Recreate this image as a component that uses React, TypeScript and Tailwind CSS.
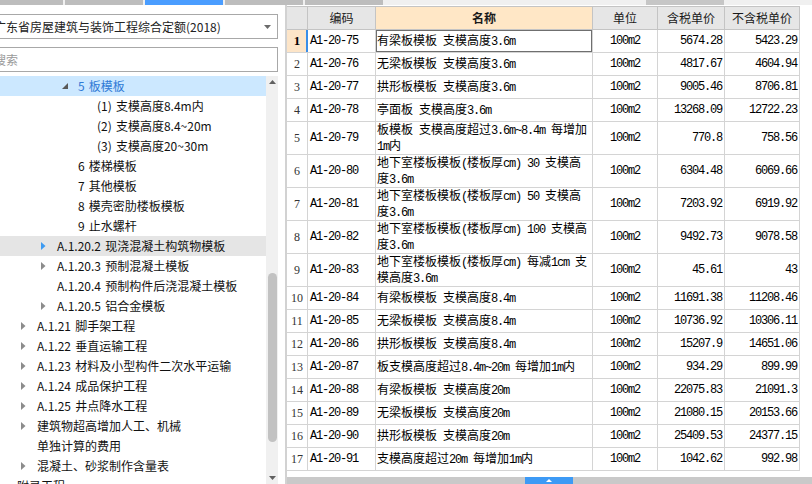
import React from 'react';

type TreeItem = {
  text: string;
  level: number;
  arrow?: 'open' | 'closed' | 'hover';
  state?: 'selected' | 'hover';
};

const tree: TreeItem[] = [
  { text: '5 板模板', level: 3, arrow: 'open', state: 'selected' },
  { text: '(1) 支模高度8.4m内', level: 4 },
  { text: '(2) 支模高度8.4~20m', level: 4 },
  { text: '(3) 支模高度20~30m', level: 4 },
  { text: '6 楼梯模板', level: 3 },
  { text: '7 其他模板', level: 3 },
  { text: '8 模壳密肋楼板模板', level: 3 },
  { text: '9 止水螺杆', level: 3 },
  { text: 'A.1.20.2 现浇混凝土构筑物模板', level: 2, arrow: 'hover', state: 'hover' },
  { text: 'A.1.20.3 预制混凝土模板', level: 2, arrow: 'closed' },
  { text: 'A.1.20.4 预制构件后浇混凝土模板', level: 2 },
  { text: 'A.1.20.5 铝合金模板', level: 2, arrow: 'closed' },
  { text: 'A.1.21 脚手架工程', level: 1, arrow: 'closed' },
  { text: 'A.1.22 垂直运输工程', level: 1, arrow: 'closed' },
  { text: 'A.1.23 材料及小型构件二次水平运输', level: 1, arrow: 'closed' },
  { text: 'A.1.24 成品保护工程', level: 1, arrow: 'closed' },
  { text: 'A.1.25 井点降水工程', level: 1, arrow: 'closed' },
  { text: '建筑物超高增加人工、机械', level: 1, arrow: 'closed' },
  { text: '单独计算的费用', level: 1 },
  { text: '混凝土、砂浆制作含量表', level: 1, arrow: 'closed' },
  { text: '附录工程', level: 0 },
];

const indent: Record<number, string> = {
  0: 'pl-[1px]',
  1: 'pl-[21px]',
  2: 'pl-[41px]',
  3: 'pl-[62px]',
  4: 'pl-[81px]',
};

type Row = { code: string; name: string[]; a: string; b: string };

const rows: Row[] = [
  { code: 'A1-20-75', name: ['有梁板模板 支模高度3.6m'], a: '5674.28', b: '5423.29' },
  { code: 'A1-20-76', name: ['无梁板模板 支模高度3.6m'], a: '4817.67', b: '4604.94' },
  { code: 'A1-20-77', name: ['拱形板模板 支模高度3.6m'], a: '9005.46', b: '8706.81' },
  { code: 'A1-20-78', name: ['亭面板 支模高度3.6m'], a: '13268.09', b: '12722.23' },
  { code: 'A1-20-79', name: ['板模板 支模高度超过3.6m~8.4m 每增加', '1m内'], a: '770.8', b: '758.56' },
  { code: 'A1-20-80', name: ['地下室楼板模板(楼板厚cm) 30 支模高', '度3.6m'], a: '6304.48', b: '6069.66' },
  { code: 'A1-20-81', name: ['地下室楼板模板(楼板厚cm) 50 支模高', '度3.6m'], a: '7203.92', b: '6919.92' },
  { code: 'A1-20-82', name: ['地下室楼板模板(楼板厚cm) 100 支模高', '度3.6m'], a: '9492.73', b: '9078.58' },
  { code: 'A1-20-83', name: ['地下室楼板模板(楼板厚cm) 每减1cm 支', '模高度3.6m'], a: '45.61', b: '43' },
  { code: 'A1-20-84', name: ['有梁板模板 支模高度8.4m'], a: '11691.38', b: '11208.46' },
  { code: 'A1-20-85', name: ['无梁板模板 支模高度8.4m'], a: '10736.92', b: '10306.11' },
  { code: 'A1-20-86', name: ['拱形板模板 支模高度8.4m'], a: '15207.9', b: '14651.06' },
  { code: 'A1-20-87', name: ['板支模高度超过8.4m~20m 每增加1m内'], a: '934.29', b: '899.99' },
  { code: 'A1-20-88', name: ['有梁板模板 支模高度20m'], a: '22075.83', b: '21091.3' },
  { code: 'A1-20-89', name: ['无梁板模板 支模高度20m'], a: '21080.15', b: '20153.66' },
  { code: 'A1-20-90', name: ['拱形板模板 支模高度20m'], a: '25409.53', b: '24377.15' },
  { code: 'A1-20-91', name: ['支模高度超过20m 每增加1m内'], a: '1042.62', b: '992.98' },
];

// ascii runs get a narrow mono face so they sit like the half-width digits of the original
function Mixed({ s }: { s: string }) {
  const parts = s.split(/([\x20-\x7e]+)/);
  return (
    <>
      {parts.map((p, i) =>
        /^[\x20-\x7e]+$/.test(p) ? (
          <span key={i} className="font-['Liberation_Mono',monospace] tracking-[-1.2px]">
            {p}
          </span>
        ) : (
          <span key={i}>{p}</span>
        ),
      )}
    </>
  );
}

function Arrow({ kind }: { kind?: TreeItem['arrow'] }) {
  if (kind === 'open') {
    return (
      <svg width="6" height="6" viewBox="0 0 6 6">
        <polygon points="6,0 6,6 0,6" fill="#595959" />
      </svg>
    );
  }
  if (kind === 'closed' || kind === 'hover') {
    return (
      <svg width="5" height="8" viewBox="0 0 5 8">
        <polygon points="0,0 4.5,4 0,8" fill={kind === 'hover' ? '#3d9bf2' : '#8c8c8c'} />
      </svg>
    );
  }
  return null;
}

function LeftPanel() {
  return (
    <div className="w-[285px] shrink-0 flex flex-col overflow-hidden bg-white pr-[7px]">
      <div className="ml-[-10px] mt-[9px] h-[25px] flex items-center border border-[#a8a8a8] bg-white pl-[3px] pr-[6px]">
        <span className="flex-1 whitespace-nowrap text-[12px] text-[#222]">广东省房屋建筑与装饰工程综合定额(2018)</span>
        <svg width="7" height="4" viewBox="0 0 7 4">
          <polygon points="0,0 7,0 3.5,4" fill="#6b6b6b" />
        </svg>
      </div>
      <div className="ml-[-10px] mt-[8px] h-[25px] flex items-center border border-[#a8a8a8] bg-white pl-[3px]">
        <span className="text-[12px] text-[#9a9a9a]">搜索</span>
      </div>
      <div className="mt-[4px] flex flex-1 min-h-0">
        <div className="flex-1 min-w-0 overflow-hidden">
          {tree.map((t, i) => (
            <div
              key={i}
              className={`h-[20px] flex items-center whitespace-nowrap ${indent[t.level]} ${
                t.state === 'selected' ? 'bg-[#cce8ff]' : t.state === 'hover' ? 'bg-[#e5e5e5]' : ''
              }`}
            >
              <span className="w-[16px] shrink-0 flex items-center">
                <Arrow kind={t.arrow} />
              </span>
              <span
                className={`text-[12px] leading-[20px] [word-spacing:1.5px] ${
                  t.state === 'selected' ? 'text-[#2f7ad6]' : 'text-[#111]'
                }`}
              >
                {t.text}
              </span>
            </div>
          ))}
        </div>
        <div className="w-[12px] shrink-0 bg-[#f0f0f0] flex flex-col items-center">
          <div className="h-[12px] flex items-center justify-center">
            <svg width="7" height="4" viewBox="0 0 7 4">
              <polygon points="3.5,0 7,4 0,4" fill="#606060" />
            </svg>
          </div>
          <div className="h-[185px]" />
          <div className="w-[9px] h-[169px] rounded-full bg-[#c2c2c2]" />
          <div className="flex-1" />
          <div className="h-[13px] flex items-center justify-center">
            <svg width="7" height="4" viewBox="0 0 7 4">
              <polygon points="0,0 7,0 3.5,4" fill="#606060" />
            </svg>
          </div>
        </div>
      </div>
    </div>
  );
}

const colW = ['w-[21px]', 'w-[68px]', 'w-[217px]', 'w-[65px]', 'w-[67px]', 'w-[75px]'];

function Grid() {
  const headers = ['', '编码', '名称', '单位', '含税单价', '不含税单价'];
  return (
    <div className="w-[513px]">
      <div className="flex h-[24px] border-t border-b border-[#c4c4c4]">
        {headers.map((h, i) => (
          <div
            key={i}
            className={`${colW[i]} shrink-0 border-r border-[#c4c4c4] flex items-center justify-center text-[12px] text-[#1a1a1a] ${
              i === 2 ? 'bg-[#ffe7c6] font-bold' : 'bg-[#e6e6e6]'
            }`}
          >
            {h}
          </div>
        ))}
      </div>
      {rows.map((r, i) => {
        const tall = r.name.length > 1;
        const first = i === 0;
        return (
          <div
            key={r.code}
            className={`flex border-b border-[#d4d4d4] text-[12px] text-black ${tall ? 'h-[33px]' : 'h-[23px]'}`}
          >
            <div
              className={`relative ${colW[0]} shrink-0 border-r border-[#d4d4d4] flex items-center justify-center font-['Liberation_Serif',serif] ${
                first ? 'bg-[#fde5c8] font-bold text-[13px]' : 'text-[12px] text-[#333]'
              }`}
            >
              {i + 1}
              {first && <div className="absolute right-[-1px] top-0 bottom-0 w-[2px] bg-[#3a8ee8]" />}
            </div>
            <div className={`${colW[1]} shrink-0 border-r border-[#d4d4d4] flex items-center pl-[2px] font-['Liberation_Mono',monospace] tracking-[-1.2px]`}>
              {r.code}
            </div>
            <div className={`relative ${colW[2]} shrink-0 border-r border-[#d4d4d4] flex flex-col justify-center pl-[1px] overflow-hidden whitespace-nowrap leading-[13px]`}>
              {r.name.map((l, k) => (
                <div key={k}>
                  <Mixed s={l} />
                </div>
              ))}
              {first && <div className="absolute -left-px -top-px right-[-1px] bottom-[-1px] border-2 border-[#6f6f6f]" />}
            </div>
            <div className={`${colW[3]} shrink-0 border-r border-[#d4d4d4] flex items-center justify-center font-['Liberation_Mono',monospace] tracking-[-1.2px]`}>
              100m2
            </div>
            <div className={`${colW[4]} shrink-0 border-r border-[#d4d4d4] flex items-center justify-end pr-[2px] font-['Liberation_Mono',monospace] tracking-[-1.2px]`}>
              {r.a}
            </div>
            <div className={`${colW[5]} shrink-0 border-r border-[#d4d4d4] flex items-center justify-end pr-[2px] font-['Liberation_Mono',monospace] tracking-[-1.2px]`}>
              {r.b}
            </div>
          </div>
        );
      })}
    </div>
  );
}

export default function App() {
  return (
    <div className="w-[812px] h-[484px] overflow-hidden flex flex-col bg-white font-['Noto_Sans_CJK_SC','Noto_Sans',sans-serif]">
      <div className="h-[5px] shrink-0 flex gap-[2px] bg-[#f0f0f0]">
        <div className="w-[63px] bg-[#bdbdbd]" />
        <div className="w-[78px] bg-[#bdbdbd]" />
        <div className="w-[78px] bg-[#4a9dff]" />
        <div className="w-[78px] bg-[#bdbdbd]" />
        <div className="w-[78px] bg-[#bdbdbd]" />
        <div className="ml-[261px] w-[78px] bg-[#c6c6c6]" />
      </div>
      <div className="flex flex-1 min-h-0">
        <LeftPanel />
        <div className="w-[2px] shrink-0 bg-[#d2d2d2]" />
        <div className="flex-1 min-w-0 flex flex-col pt-[1px] bg-white">
          <div className="flex-1 min-h-0 overflow-hidden">
            <Grid />
          </div>
          <div className="h-[7px] shrink-0 bg-[#c9c9c9] flex">
            <div className="ml-[238px] w-[48px] bg-[#3d9af5] flex items-center justify-center">
              <svg width="6" height="3" viewBox="0 0 6 3">
                <polygon points="3,0 6,3 0,3" fill="#ffffff" />
              </svg>
            </div>
          </div>
        </div>
      </div>
    </div>
  );
}
